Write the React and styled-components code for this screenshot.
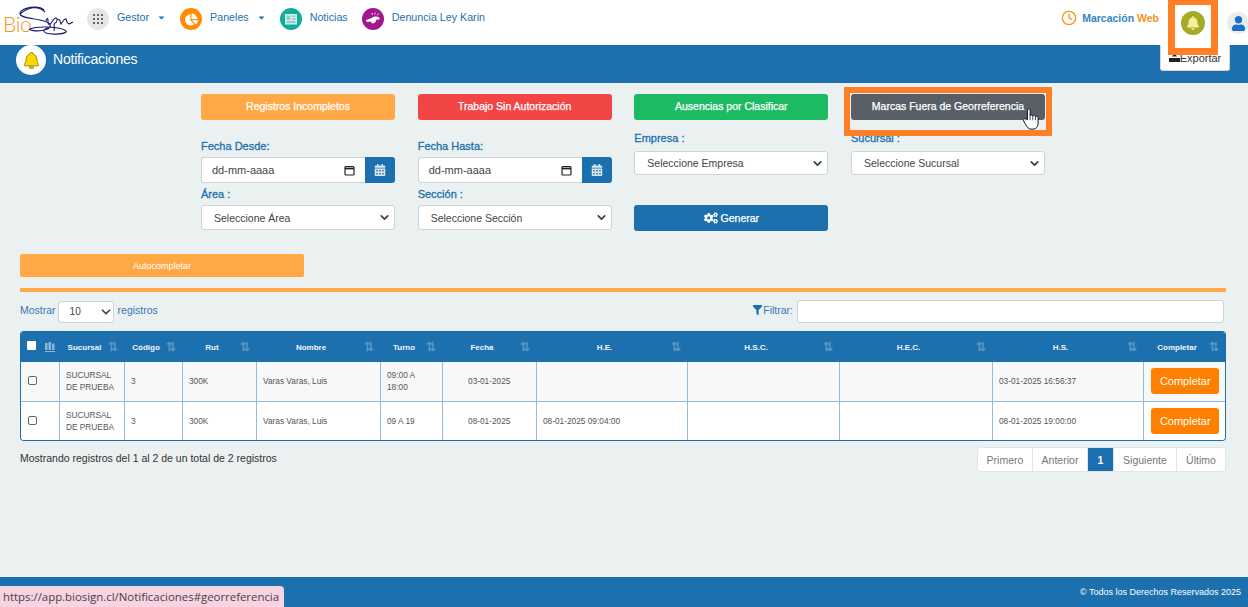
import styled, { createGlobalStyle } from "styled-components";
import { FaCalendarAlt, FaCogs, FaFilter, FaBell, FaChartPie, FaUser, FaCaretDown } from "react-icons/fa";
import { FiClock } from "react-icons/fi";
import { LuChevronDown } from "react-icons/lu";

const BLUE = "#1c70ad";

const GlobalStyle = createGlobalStyle`
  * { box-sizing: border-box; }
  html, body { margin: 0; padding: 0; height: 100%; }
  body { font-family: "Liberation Sans", Arial, sans-serif; background: #ebf0f1; overflow: hidden; }
`;

const columns = [38, 65, 58, 74, 124, 62, 94, 151, 152, 153, 151, 82];

const rows = [
  { turno: ["09:00 A", "18:00"], fecha: "03-01-2025", he: "", hs: "03-01-2025 16:56:37" },
  { turno: ["09 A 19"], fecha: "08-01-2025", he: "08-01-2025 09:04:00", hs: "08-01-2025 19:00:00" },
];

export default function App() {
  return (
    <Page>
      <GlobalStyle />
      <Navbar>
        <Logo>
          <LogoText>Bio</LogoText>
          <Signature viewBox="0 0 80 40" fill="none" stroke="#14186b" strokeWidth="1.1">
            <path d="M44 10C38 4 22 8 20 13C19 18 34 18 44 21C53 24 52 28 44 30C36 32 28 30 30 29C36 26 60 26 66 31C68 34 52 35 46 33C42 31 44 29 48 28" />
            <path d="M20 14C28 7 38 5 45 12" />
            <path d="M46 21C47 18 48 18 48 20C48 23 48 25 50 24C52 23 53 18 56 18C58 18 57 23 55 23C53 23 55 28 54 31M58 20C60 18 60 22 61 24C63 21 65 18 66 19C67 21 66 23 69 24C70 24 71 23 73 22" />
          </Signature>
        </Logo>
        <NavItem $first>
          <NavCircle $bg="#e6e6e6">
            <DotGrid>
              {Array.from({ length: 9 }).map((_, i) => <i key={i} />)}
            </DotGrid>
          </NavCircle>
          <NavLabel>Gestor</NavLabel>
          <Caret><FaCaretDown /></Caret>
        </NavItem>
        <NavItem>
          <NavCircle $bg="#ff8c00"><FaChartPie size={13} color="#fff" /></NavCircle>
          <NavLabel>Paneles</NavLabel>
          <Caret><FaCaretDown /></Caret>
        </NavItem>
        <NavItem>
          <NavCircle $bg="#0fae9b">
            <svg width="14" height="14" viewBox="0 0 14 14">
              <rect x="1" y="2" width="12" height="10.5" fill="#d9efec" />
              <rect x="2.5" y="3.5" width="4" height="4.5" fill="#8fcfc7" />
              <rect x="8" y="3.5" width="3.5" height="1.5" fill="#8fcfc7" />
              <rect x="8" y="6" width="3.5" height="2" fill="#8fcfc7" />
              <rect x="2.5" y="9" width="9" height="2.2" fill="#8fcfc7" />
            </svg>
          </NavCircle>
          <NavLabel>Noticias</NavLabel>
        </NavItem>
        <NavItem>
          <NavCircle $bg="#a0188c">
            <svg width="16" height="14" viewBox="0 0 16 14" fill="#fff">
              <path d="M1 8L7 6C8 4 12 4 14 5.5L15 7L11 8C11 11 8 12 6.5 11L5.5 9.5L1.5 10Z" />
              <path d="M7.5 3L7 1M10 2.5V.5M12.5 3.3L13.5 1.5" stroke="#fff" strokeWidth="0.8" />
            </svg>
          </NavCircle>
          <NavLabel>Denuncia Ley Karin</NavLabel>
        </NavItem>
        <NavRight>
          <Marcacion>
            <FiClock size={16} color="#f7931e" />
            <span>Marcación <b>Web</b></span>
          </Marcacion>
          <BellCircle><FaBell size={14} color="#f3ef9a" /></BellCircle>
          <UserCircle><FaUser size={15} color="#1c70c8" /></UserCircle>
        </NavRight>
      </Navbar>

      <TitleBar>
        <TitleIcon>
          <svg width="15" height="17" viewBox="0 0 448 512" fill="#ffd800" stroke="#8a6d00" strokeWidth="24">
            <path d="M224 512c35 0 64-29 64-64H160c0 35 29 64 64 64zm215-150c-19-21-55-52-55-154 0-78-54-140-128-155V32c0-18-14-32-32-32s-32 14-32 32v21C118 68 64 130 64 208c0 102-36 133-55 154-6 6-9 14-9 22 0 16 13 32 32 32h384c19 0 32-16 32-32 0-8-3-16-9-22z" />
          </svg>
        </TitleIcon>
        <TitleText>Notificaciones</TitleText>
        <ExportButton>
          <svg width="11" height="9" viewBox="0 0 11 9" fill="#222">
            <path d="M0 5h11v4H0zM3 3.5L5.5 0 8 3.5z" />
          </svg>
          Exportar
        </ExportButton>
      </TitleBar>

      <Content>
        <FilterGrid>
          <FilterColumn>
            <TabButton $bg="#ffa845">Registros Incompletos</TabButton>
            <FieldLabel $top={20}>Fecha Desde:</FieldLabel>
            <DateField />
            <FieldLabel $top={5}>Área :</FieldLabel>
            <SelectBox label="Seleccione Área" />
          </FilterColumn>
          <FilterColumn>
            <TabButton $bg="#f24646">Trabajo Sin Autorización</TabButton>
            <FieldLabel $top={20}>Fecha Hasta:</FieldLabel>
            <DateField />
            <FieldLabel $top={5}>Sección :</FieldLabel>
            <SelectBox label="Seleccione Sección" />
          </FilterColumn>
          <FilterColumn>
            <TabButton $bg="#1cbb63">Ausencias por Clasificar</TabButton>
            <FieldLabel $top={12} $gap={6}>Empresa :</FieldLabel>
            <SelectBox short label="Seleccione Empresa" />
            <GenerateButton><FaCogs size={14} />Generar</GenerateButton>
          </FilterColumn>
          <FilterColumn>
            <TabButton $bg="#585f66">Marcas Fuera de Georreferencia</TabButton>
            <FieldLabel $top={12} $gap={6}>Sucursal :</FieldLabel>
            <SelectBox short label="Seleccione Sucursal" />
            <Highlight />
            <HandCursor viewBox="0 0 20 26">
              <path d="M6 14V3.5C6 1.5 9 1.5 9 3.5V10C9 8.5 12 8.5 12 10.5C12 9 15 9 15 11C15 10 18 10 18 12V18C18 22 16 25 12 25H10C7 25 6 23 4 20L1.5 15.5C1 13.5 3.5 12.5 4.5 14Z" fill="#fff" stroke="#111" strokeWidth="1.1" strokeLinejoin="round" />
              <path d="M9 10V15M12 10.5V15M15 11V15" stroke="#111" strokeWidth="0.8" />
            </HandCursor>
          </FilterColumn>
        </FilterGrid>

        <AutoButton>Autocompletar</AutoButton>
        <Divider />

        <TableTools>
          <ToolGroup>
            <ToolText>Mostrar</ToolText>
            <LengthSelect>10<LuChevronDown size={14} strokeWidth={3} /></LengthSelect>
            <ToolText>registros</ToolText>
          </ToolGroup>
          <ToolGroup>
            <FilterMark><FaFilter size={9} /></FilterMark>
            <ToolText>Filtrar:</ToolText>
            <SearchInput />
          </ToolGroup>
        </TableTools>

        <TableFrame>
          <Table>
            <colgroup>
              {columns.map((w, i) => <col key={i} style={{ width: w }} />)}
            </colgroup>
            <thead>
              <tr>
                <HeadCell $first>
                  <HeadCheck />
                  <StackMark viewBox="0 0 10 10" fill="#8ab8d8">
                    <path d="M0 1h2.5v7H0zM3.5 0H6v8H3.5zM7 1.5h2.5V8H7zM0 9h10v1H0z" />
                  </StackMark>
                </HeadCell>
                {["Sucursal", "Código", "Rut", "Nombre", "Turno", "Fecha", "H.E.", "H.S.C.", "H.E.C.", "H.S.", "Completar"].map((h) => (
                  <HeadCell key={h}>{h}<SortMark>⇅</SortMark></HeadCell>
                ))}
              </tr>
            </thead>
            <tbody>
              {rows.map((r, i) => (
                <BodyRow key={i} $odd={i === 0}>
                  <BodyCell><RowCheck /></BodyCell>
                  <BodyCell>SUCURSAL<br />DE PRUEBA</BodyCell>
                  <BodyCell>3</BodyCell>
                  <BodyCell>300K</BodyCell>
                  <BodyCell>Varas Varas, Luis</BodyCell>
                  <BodyCell>{r.turno[0]}{r.turno[1] && <><br />{r.turno[1]}</>}</BodyCell>
                  <BodyCell $center>{r.fecha}</BodyCell>
                  <BodyCell>{r.he}</BodyCell>
                  <BodyCell />
                  <BodyCell />
                  <BodyCell>{r.hs}</BodyCell>
                  <BodyCell $center $tight><CompleteButton>Completar</CompleteButton></BodyCell>
                </BodyRow>
              ))}
            </tbody>
          </Table>
        </TableFrame>

        <TableFooter>
          <InfoText>Mostrando registros del 1 al 2 de un total de 2 registros</InfoText>
          <Pagination>
            <PageLink $w={55}>Primero</PageLink>
            <PageLink $w={55}>Anterior</PageLink>
            <PageLink $w={26} $active>1</PageLink>
            <PageLink $w={63}>Siguiente</PageLink>
            <PageLink $w={48}>Último</PageLink>
          </Pagination>
        </TableFooter>
      </Content>

      <Footer>© Todos los Derechos Reservados 2025</Footer>
      <StatusBubble>https://app.biosign.cl/Notificaciones#georreferencia</StatusBubble>
      <BellHighlight />
    </Page>
  );
}

function DateField() {
  return (
    <DateRow>
      <DateBox>
        <span>dd-mm-aaaa</span>
        <svg width="11" height="11" viewBox="0 0 11 11" fill="none" stroke="#222" strokeWidth="1.2">
          <rect x="1" y="1.5" width="9" height="8.5" rx="1" />
          <path d="M1 3.5h9" strokeWidth="1.8" />
        </svg>
      </DateBox>
      <DateAddon><FaCalendarAlt size={12} /></DateAddon>
    </DateRow>
  );
}

function SelectBox({ label, short }) {
  return (
    <SelectShell $short={short}>
      <span>{label}</span>
      <LuChevronDown size={13} strokeWidth={3.4} color="#444" />
    </SelectShell>
  );
}

const Page = styled.div`
  position: relative;
  width: 1248px;
  height: 607px;
  display: flex;
  flex-direction: column;
  overflow: hidden;
`;

const Navbar = styled.header`
  height: 45px;
  flex: none;
  background: #fff;
  display: flex;
  align-items: flex-start;
  padding-left: 3px;
`;

const Logo = styled.div`
  position: relative;
  width: 74px;
  height: 36px;
  margin-top: 3px;
`;

const LogoText = styled.span`
  position: absolute;
  left: 0;
  top: 8px;
  font-family: Lato, "Liberation Sans", sans-serif;
  font-size: 21px;
  font-weight: 300;
  letter-spacing: -0.3px;
  color: #f7931e;
`;

const Signature = styled.svg`
  position: absolute;
  left: -3px;
  top: -3px;
  width: 80px;
  height: 40px;
`;

const NavItem = styled.div`
  display: flex;
  align-items: flex-start;
  height: 30px;
  margin-top: 8px;
  margin-left: ${(p) => (p.$first ? "10px" : "0")};
  margin-right: 14px;
`;

const NavCircle = styled.div`
  width: 22px;
  height: 22px;
  border-radius: 50%;
  background: ${(p) => p.$bg};
  display: flex;
  align-items: center;
  justify-content: center;
`;

const DotGrid = styled.div`
  display: grid;
  grid-template-columns: repeat(3, 2px);
  gap: 2px;
  & > i { width: 2px; height: 2px; background: #666; display: block; }
`;

const NavLabel = styled.span`
  font-size: 10.7px;
  color: ${BLUE};
  margin-left: 8px;
  line-height: 19px;
`;

const Caret = styled.span`
  font-size: 9px;
  color: ${BLUE};
  margin-left: 8px;
  line-height: 22px;
`;

const NavRight = styled.div`
  margin-left: auto;
  display: flex;
  align-items: center;
  height: 45px;
`;

const Marcacion = styled.div`
  display: flex;
  align-items: center;
  gap: 5px;
  font-size: 10.5px;
  font-weight: 700;
  color: #3383c4;
  margin-right: 22px;
  margin-top: -10px;
  & b { color: #f7931e; }
`;

const BellCircle = styled.div`
  width: 24px;
  height: 24px;
  border-radius: 50%;
  background: #a4aa25;
  display: flex;
  align-items: center;
  justify-content: center;
  margin-right: 22px;
  margin-top: 1px;
`;

const UserCircle = styled.div`
  width: 22px;
  height: 22px;
  border-radius: 50%;
  background: #eaecef;
  display: flex;
  align-items: center;
  justify-content: center;
  margin-right: -1px;
  margin-top: 1px;
  flex: none;
`;

const TitleBar = styled.div`
  height: 38px;
  flex: none;
  background: ${BLUE};
  display: flex;
  align-items: flex-start;
  padding-left: 16px;
  position: relative;
`;

const TitleIcon = styled.div`
  width: 30px;
  height: 30px;
  border-radius: 50%;
  background: #fff;
  display: flex;
  align-items: center;
  justify-content: center;
`;

const TitleText = styled.h1`
  margin: 6px 0 0 7px;
  font-size: 14px;
  font-weight: 400;
  letter-spacing: -0.2px;
  color: #fff;
`;

const ExportButton = styled.button`
  position: absolute;
  left: 1160px;
  top: 0;
  width: 70px;
  height: 26px;
  background: #fff;
  border: 1px solid #d5d5d5;
  border-top: none;
  border-radius: 0 0 3px 3px;
  font: 11px "Liberation Sans", Arial, sans-serif;
  color: #333;
  padding: 0;
  display: flex;
  align-items: center;
  justify-content: center;
`;

const Content = styled.main`
  flex: 1;
  min-height: 0;
  padding: 11px 22px 0 20px;
`;

const FilterGrid = styled.div`
  display: grid;
  grid-template-columns: repeat(4, 194px);
  column-gap: 22.67px;
  margin-left: 181px;
  height: 137px;
`;

const FilterColumn = styled.div`
  position: relative;
  display: flex;
  flex-direction: column;
  align-items: stretch;
`;

const TabButton = styled.button`
  height: 26px;
  flex: none;
  border: none;
  border-radius: 3px;
  background: ${(p) => p.$bg};
  color: #fff;
  font: 10.5px "Liberation Sans", Arial, sans-serif;
  -webkit-text-stroke: 0.25px #fff;
  padding: 0 0 2px;
`;

const FieldLabel = styled.label`
  display: block;
  margin-top: ${(p) => p.$top}px;
  margin-bottom: ${(p) => p.$gap ?? 4}px;
  height: 13px;
  font-size: 11px;
  line-height: 13px;
  color: ${BLUE};
  -webkit-text-stroke: 0.3px ${BLUE};
`;

const DateRow = styled.div`
  display: flex;
  height: 26px;
  flex: none;
`;

const DateBox = styled.div`
  flex: 1;
  background: #fff;
  border: 1px solid #cfd3d6;
  border-right: none;
  border-radius: 3px 0 0 3px;
  display: flex;
  align-items: center;
  justify-content: space-between;
  padding: 0 10px 0 10px;
  font-size: 11px;
  color: #444;
`;

const DateAddon = styled.div`
  width: 30px;
  background: ${BLUE};
  color: #d8e8f3;
  border-radius: 0 3px 3px 0;
  display: flex;
  align-items: center;
  justify-content: center;
`;

const SelectShell = styled.div`
  height: ${(p) => (p.$short ? "24px" : "25px")};
  flex: none;
  background: #fff;
  border: 1px solid #cfd3d6;
  border-radius: 3px;
  display: flex;
  align-items: center;
  justify-content: space-between;
  padding: 0 3px 0 12px;
  font-size: 10.5px;
  color: #444;
`;

const GenerateButton = styled.button`
  height: 26px;
  margin-top: 30px;
  flex: none;
  border: none;
  border-radius: 3px;
  background: ${BLUE};
  color: #fff;
  font: 10.5px "Liberation Sans", Arial, sans-serif;
  -webkit-text-stroke: 0.25px #fff;
  display: flex;
  align-items: center;
  justify-content: center;
  gap: 3px;
  padding: 0;
`;

const Highlight = styled.div`
  position: absolute;
  left: -7px;
  top: -7px;
  width: 208px;
  height: 49px;
  border: 6px solid #ff7f27;
  pointer-events: none;
`;

const HandCursor = styled.svg`
  position: absolute;
  left: 171px;
  top: 13px;
  width: 18px;
  height: 23px;
`;

const AutoButton = styled.button`
  display: block;
  width: 284px;
  height: 23px;
  margin-top: 23px;
  border: none;
  border-radius: 2px;
  background: #ffa845;
  color: #fff;
  font: 9px "Liberation Sans", Arial, sans-serif;
  padding: 0;
`;

const Divider = styled.div`
  height: 4px;
  margin-top: 11px;
  background: #ffa845;
`;

const TableTools = styled.div`
  display: flex;
  justify-content: space-between;
  align-items: center;
  height: 23px;
  margin-top: 8px;
  margin-right: 2px;
`;

const ToolGroup = styled.div`
  display: flex;
  align-items: center;
`;

const ToolText = styled.span`
  font-size: 10.5px;
  color: #3877b8;
  margin-top: -3px;
`;

const LengthSelect = styled.div`
  width: 56px;
  height: 22px;
  margin: 0 4px 0 2px;
  background: #fff;
  border: 1px solid #cfd3d6;
  border-radius: 3px;
  display: flex;
  align-items: center;
  justify-content: space-between;
  padding: 0 0 0 11px;
  font-size: 10px;
  color: #444;
`;

const FilterMark = styled.span`
  color: ${BLUE};
  display: flex;
  margin-right: 1px;
  margin-top: -4px;
  border-top: 1px solid ${BLUE};
`;

const SearchInput = styled.div`
  width: 427px;
  height: 23px;
  margin-left: 4px;
  background: #fff;
  border: 1px solid #cfd3d6;
  border-radius: 3px;
`;

const TableFrame = styled.div`
  width: 1206px;
  margin-top: 8px;
  border: 1px solid ${BLUE};
  border-top: none;
  border-radius: 4px;
  overflow: hidden;
`;

const Table = styled.table`
  width: 1204px;
  table-layout: fixed;
  border-collapse: collapse;
`;

const HeadCell = styled.th`
  position: relative;
  height: 31px;
  padding: 2px 18px 0 ${(p) => (p.$first ? "0" : "4px")};
  background: ${BLUE};
  color: #f2f7fb;
  font-size: 8px;
  font-weight: 700;
  text-align: center;
`;

const HeadCheck = styled.span`
  position: absolute;
  left: 6px;
  top: 10px;
  width: 9px;
  height: 9px;
  background: #fff;
  border-radius: 1px;
`;

const StackMark = styled.svg`
  position: absolute;
  right: 4px;
  top: 11px;
  width: 10px;
  height: 10px;
`;

const SortMark = styled.span`
  position: absolute;
  right: 6px;
  top: 10px;
  color: #5a97c5;
  font-size: 12px;
  font-weight: 700;
  line-height: 12px;
`;

const BodyRow = styled.tr`
  background: ${(p) => (p.$odd ? "#f8f8f8" : "#fff")};
`;

const BodyCell = styled.td`
  height: 39px;
  padding: 0 ${(p) => (p.$tight ? "0 0 2px" : "6px 0 6.5px")};
  border: 1px solid #92bde0;
  border-top: none;
  font-size: 8.3px;
  line-height: 12px;
  color: #555;
  text-align: ${(p) => (p.$center ? "center" : "left")};
  &:first-child { border-left: none; }
  &:last-child { border-right: none; }
  tr:last-child & { border-bottom: none; }
`;

const RowCheck = styled.span`
  display: inline-block;
  width: 9px;
  height: 9px;
  margin-top: 2px;
  background: #fff;
  border: 1px solid #666;
  border-radius: 2px;
`;

const CompleteButton = styled.button`
  width: 68px;
  height: 26px;
  border: none;
  border-radius: 3px;
  background: #ff8000;
  color: #fff;
  font: 11px "Liberation Sans", Arial, sans-serif;
  padding: 0;
  display: block;
  margin: 0 auto;
`;

const TableFooter = styled.div`
  display: flex;
  justify-content: space-between;
  align-items: flex-start;
  margin-top: 6px;
`;

const InfoText = styled.span`
  font-size: 10.5px;
  color: #333;
  margin-top: 5px;
`;

const Pagination = styled.nav`
  display: flex;
  height: 25px;
  background: #fff;
  border: 1px solid #e2e5e7;
  border-radius: 3px;
`;

const PageLink = styled.a`
  width: ${(p) => p.$w}px;
  display: flex;
  align-items: center;
  justify-content: center;
  font-size: 10.5px;
  font-weight: ${(p) => (p.$active ? 700 : 400)};
  color: ${(p) => (p.$active ? "#fff" : "#777")};
  background: ${(p) => (p.$active ? BLUE : "transparent")};
  border-right: 1px solid #e2e5e7;
  &:last-child { border-right: none; }
`;

const Footer = styled.footer`
  height: 30px;
  flex: none;
  background: ${BLUE};
  color: #fff;
  font-size: 9px;
  font-weight: 400;
  display: flex;
  align-items: center;
  justify-content: flex-end;
  padding-right: 7px;
`;

const StatusBubble = styled.div`
  position: absolute;
  left: 0;
  bottom: 0;
  width: 284px;
  height: 21px;
  padding-left: 3px;
  background: #f8d3e2;
  border-top-right-radius: 4px;
  font: 11.4px/21px "Open Sans", sans-serif;
  color: #444;
  white-space: nowrap;
`;

const BellHighlight = styled.div`
  position: absolute;
  left: 1168px;
  top: 0;
  width: 50px;
  height: 55px;
  border: 7px solid #ff7f27;
  border-top-width: 5px;
  pointer-events: none;
`;
